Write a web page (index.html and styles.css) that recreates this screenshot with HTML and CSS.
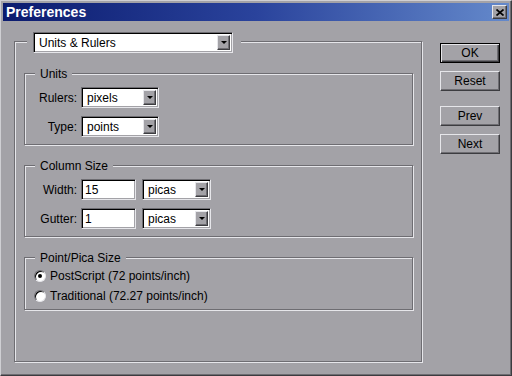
FILE: index.html
```html
<!DOCTYPE html>
<html lang="en">
<head>
  <meta charset="UTF-8" />
  <title>Preferences</title>
  <link rel="stylesheet" href="styles.css">
</head>
<body>
  <div class="window">
    <div class="titlebar">
      <span class="title">Preferences</span>
      <button class="close" aria-label="Close">
        <svg width="8" height="7" viewBox="0 0 8 7"><path d="M0.5 0.5L7.5 6.5M7.5 0.5L0.5 6.5" stroke="#000" stroke-width="1.7" fill="none"/></svg>
      </button>
    </div>

    <div class="client">
      <div class="panel">
        <div class="panel-head">
          <div class="select wide"><span class="value">Units &amp; Rulers</span><span class="arrow"></span></div>
        </div>

        <div class="group">
          <div class="legend">Units</div>
          <div class="row first">
            <label>Rulers:</label>
            <div class="select unit"><span class="value">pixels</span><span class="arrow"></span></div>
          </div>
          <div class="row">
            <label>Type:</label>
            <div class="select unit"><span class="value">points</span><span class="arrow"></span></div>
          </div>
        </div>

        <div class="group">
          <div class="legend">Column Size</div>
          <div class="row first">
            <label>Width:</label>
            <div class="field">15</div>
            <div class="select pica"><span class="value">picas</span><span class="arrow"></span></div>
          </div>
          <div class="row">
            <label>Gutter:</label>
            <div class="field">1</div>
            <div class="select pica"><span class="value">picas</span><span class="arrow"></span></div>
          </div>
        </div>

        <div class="group radios">
          <div class="legend">Point/Pica Size</div>
          <div class="radio-row first"><span class="radio checked"></span>PostScript (72 points/inch)</div>
          <div class="radio-row"><span class="radio"></span>Traditional (72.27 points/inch)</div>
        </div>
      </div>

      <div class="buttons">
        <button class="btn default">OK</button>
        <button class="btn">Reset</button>
        <button class="btn spaced">Prev</button>
        <button class="btn">Next</button>
      </div>
    </div>
  </div>
</body>
</html>
```

FILE: styles.css
```css
:root {
  --face: #a3a2a7;
  --light: #e6e6ea;
  --shadow: #6e6d72;
  --dark: #3c3c40;
  --font: 'Liberation Sans', Arial, sans-serif;
}

* {
  box-sizing: border-box;
}

body {
  margin: 0;
  font-family: var(--font);
  font-size: 12px;
  color: #000;
  background: var(--face);
}

.window {
  width: 512px;
  height: 376px;
  padding: 2px;
  background: var(--face);
  border: 1px solid;
  border-color: #cfcfd3 var(--dark) var(--dark) #cfcfd3;
  box-shadow: inset -1px -1px 0 var(--shadow);
}

/* title bar */
.titlebar {
  height: 18px;
  display: flex;
  align-items: center;
  justify-content: space-between;
  padding: 0 2px 0 3px;
  background: linear-gradient(to right, #0b1b6e 0%, #2a439c 50%, #6489cb 100%);
}
.title {
  color: #fff;
  font-weight: 700;
  font-size: 14px;
  line-height: 18px;
}
.close {
  width: 15px;
  height: 14px;
  padding: 0;
  display: flex;
  align-items: center;
  justify-content: center;
  background: var(--face);
  border: 1px solid;
  border-color: var(--light) var(--dark) var(--dark) var(--light);
  box-shadow: inset -1px -1px 0 var(--shadow);
}

/* client area */
.client {
  display: flex;
  align-items: flex-start;
  padding-left: 11px;
}

.panel {
  width: 408px;
  height: 321px;
  margin-top: 20px;
  padding: 0 8px 0 9px;
  display: flex;
  flex-direction: column;
  border: 1px solid var(--shadow);
  box-shadow: inset 1px 1px 0 var(--light), 1px 1px 0 var(--light);
}
.panel-head {
  align-self: flex-start;
  margin: -10px 0 0 3px;
  padding: 0 8px 0 6px;
  background: var(--face);
}

.group {
  margin-top: 20px;
  padding-bottom: 7px;
  display: flex;
  flex-direction: column;
  border: 1px solid var(--shadow);
  box-shadow: inset 1px 1px 0 var(--light), 1px 1px 0 var(--light);
}
.legend {
  align-self: flex-start;
  margin: -7px 0 0 10px;
  padding: 0 5px;
  line-height: 14px;
  background: var(--face);
}

.row {
  display: flex;
  align-items: center;
  margin-top: 8px;
}
.row.first {
  margin-top: 6px;
}
.row label {
  width: 52px;
  margin-right: 4px;
  text-align: right;
}

/* sunken fields */
.select,
.field {
  height: 21px;
  display: flex;
  align-items: center;
  background: #fff;
  border: 1px solid;
  border-color: var(--shadow) var(--light) var(--light) var(--shadow);
  box-shadow: inset 1px 1px 0 #000, inset -1px -1px 0 var(--face);
}
.select {
  padding: 2px;
}
.select .value {
  flex: 1;
  padding-left: 3px;
}
.select .arrow {
  width: 13px;
  height: 100%;
  display: flex;
  align-items: center;
  justify-content: center;
  background: var(--face);
  border: 1px solid;
  border-color: var(--light) var(--dark) var(--dark) var(--light);
  box-shadow: inset -1px -1px 0 var(--shadow);
}
.select .arrow::after {
  content: "";
  border-left: 3px solid transparent;
  border-right: 3px solid transparent;
  border-top: 3px solid #000;
}
.select.wide {
  width: 200px;
}
.select.unit {
  width: 78px;
}
.select.pica {
  width: 69px;
  margin-left: 6px;
}
.field {
  width: 55px;
  padding-left: 3px;
}

/* radio buttons */
.radios {
  padding-bottom: 5px;
}
.radio-row {
  height: 16px;
  display: flex;
  align-items: center;
  margin-top: 4px;
  padding-left: 9px;
}
.radio-row.first {
  margin-top: 3px;
}
.radio {
  width: 12px;
  height: 12px;
  margin-right: 4px;
  display: flex;
  align-items: center;
  justify-content: center;
  border-radius: 50%;
  background: #fff;
  border: 1px solid;
  border-color: var(--shadow) var(--light) var(--light) var(--shadow);
  box-shadow: inset 1px 1px 0 #000;
}
.radio.checked::after {
  content: "";
  width: 4px;
  height: 4px;
  border-radius: 50%;
  background: #000;
}

/* push buttons */
.buttons {
  display: flex;
  flex-direction: column;
  margin: 22px 0 0 18px;
}
.btn {
  width: 60px;
  height: 20px;
  margin-top: 8px;
  padding: 0;
  font-family: var(--font);
  font-size: 12px;
  color: #000;
  background: var(--face);
  border: 1px solid;
  border-color: var(--light) var(--dark) var(--dark) var(--light);
  box-shadow: inset -1px -1px 0 var(--shadow);
}
.btn.default {
  margin-top: 0;
  border-color: #000;
  box-shadow: inset 1px 1px 0 var(--light), inset -1px -1px 0 var(--dark), inset -2px -2px 0 var(--shadow);
}
.btn.spaced {
  margin-top: 15px;
}
```
